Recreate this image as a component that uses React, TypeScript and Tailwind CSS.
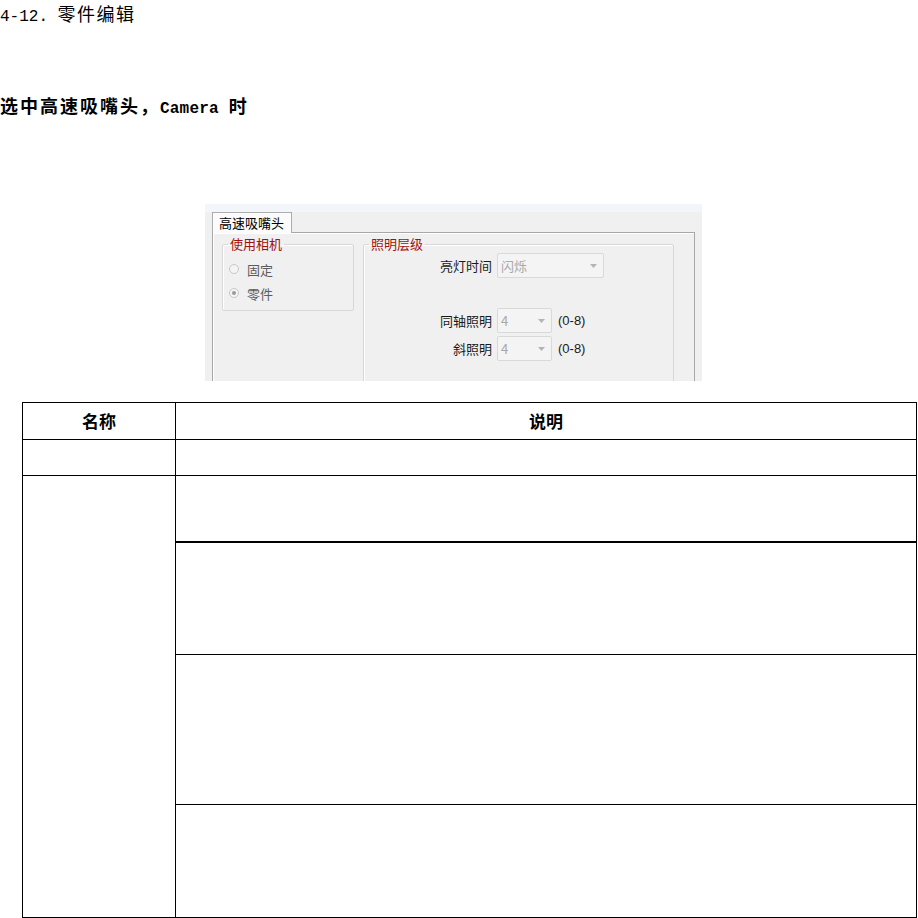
import type { ReactNode } from 'react';

const cjk = '"Noto Sans CJK SC", "Noto Sans", sans-serif';
const mono = '"Liberation Mono", "Noto Sans CJK SC", monospace';

// 截图里的禁用下拉框
function Combo({ width, value }: { width: string; value: string }) {
  return (
    <div className={`${width} h-[25px] flex items-center justify-between pl-[3px] pr-[6px] border border-[#d9d9d9] rounded-[2px] bg-[#f4f4f4]`}>
      <span className="text-[#a8a8a8] text-[13px] leading-none">{value}</span>
      <svg width="7" height="4" viewBox="0 0 7 4">
        <path d="M0 0 L7 0 L3.5 4 Z" fill="#b4b4b4" />
      </svg>
    </div>
  );
}

function Radio({ checked, label }: { checked?: boolean; label: string }) {
  return (
    <div className="h-[24px] flex items-center gap-[8px]">
      <div className="w-[10px] h-[10px] rounded-full border border-[#c8c8c8] bg-[#f4f4f4] flex items-center justify-center">
        {checked && <div className="w-[4px] h-[4px] rounded-full bg-[#9a9a9a]" />}
      </div>
      <span className="text-[13px] text-[#5c5c5c] leading-none">{label}</span>
    </div>
  );
}

function GroupBox({ title, className, children }: { title: string; className: string; children: ReactNode }) {
  return (
    <fieldset className={`border border-[#d8d8d8] rounded-[2px] shadow-[inset_1px_1px_0_#ffffff] ${className}`}>
      <legend className="ml-[5px] px-[2px] text-[13px] leading-[14px] text-[#a30f0f]">{title}</legend>
      {children}
    </fieldset>
  );
}

function LabelRow({ label, children, className }: { label: string; children: ReactNode; className: string }) {
  return (
    <div className={`flex items-center ${className}`}>
      <div className="w-[128px] text-right text-[13px] text-[#1a1a1a] leading-none">{label}</div>
      <div className="ml-[5px] flex items-center">{children}</div>
    </div>
  );
}

export default function App() {
  return (
    <div className="w-[918px] h-[918px] bg-white text-black overflow-hidden" style={{ fontFamily: cjk }}>
      {/* 标题 */}
      <div className="flex items-baseline whitespace-nowrap">
        <span className="text-[16px] leading-normal whitespace-pre" style={{ fontFamily: mono }}>4-12. </span>
        <span className="text-[18px] leading-normal tracking-[1.5px]">零件编辑</span>
      </div>

      <div className="mt-[63px] flex items-baseline whitespace-nowrap font-bold">
        <span className="text-[18px] leading-normal tracking-[2px]">选中高速吸嘴头，</span>
        <span className="text-[16px] leading-normal tracking-[0.2px] whitespace-pre" style={{ fontFamily: mono }}>Camera </span>
        <span className="text-[18px] leading-normal">时</span>
      </div>

      {/* 软件截图 */}
      <div className="ml-[205px] mt-[83px] w-[497px] h-[177px] bg-[#f0f0f0] overflow-hidden flex flex-col">
        <div className="h-[8px] bg-[#f2f5fa] shrink-0" />
        <div className="flex-1 flex flex-col px-[7px]">
          <div className="flex h-[20px] shrink-0">
            <div className="w-[80px] h-[21px] border border-b-0 border-[#adadad] bg-[#fbfbfb] text-[13px] leading-[19px] pl-[6px] relative z-10">
              高速吸嘴头
            </div>
          </div>
          <div className="flex-1 border border-b-0 border-[#a8a8a8] shadow-[inset_1px_1px_0_#ffffff] flex items-start pl-[9px] pt-[4px]">
            <GroupBox title="使用相机" className="w-[132px] h-[74px]">
              <div className="pl-[6px] pt-[6px]">
                <Radio label="固定" />
                <Radio checked label="零件" />
              </div>
            </GroupBox>
            <GroupBox title="照明层级" className="ml-[9px] w-[311px] h-[160px]">
              <LabelRow label="亮灯时间" className="mt-[2px]">
                <Combo width="w-[107px]" value="闪烁" />
              </LabelRow>
              <LabelRow label="同轴照明" className="mt-[30px]">
                <Combo width="w-[55px]" value="4" />
                <span className="ml-[6px] text-[13px] text-[#1a1a1a]" style={{ fontFamily: '"Liberation Sans", sans-serif' }}>(0-8)</span>
              </LabelRow>
              <LabelRow label="斜照明" className="mt-[3px]">
                <Combo width="w-[55px]" value="4" />
                <span className="ml-[6px] text-[13px] text-[#1a1a1a]" style={{ fontFamily: '"Liberation Sans", sans-serif' }}>(0-8)</span>
              </LabelRow>
            </GroupBox>
          </div>
        </div>
      </div>

      {/* 说明表格 */}
      <div className="ml-[22px] mt-[21px] w-[895px] border border-black">
        <div className="flex h-[37px] border-b border-black font-bold text-[17px]">
          <div className="w-[153px] border-r border-black flex items-center justify-center">名称</div>
          <div className="flex-1 flex items-center justify-center">说明</div>
        </div>
        <div className="flex h-[36px] border-b border-black">
          <div className="w-[153px] border-r border-black" />
          <div className="flex-1" />
        </div>
        <div className="flex">
          <div className="w-[153px] border-r border-black" />
          <div className="flex-1 flex flex-col">
            <div className="h-[67px] border-b-2 border-black" />
            <div className="h-[112px] border-b border-black" />
            <div className="h-[150px] border-b border-black" />
            <div className="h-[112px]" />
          </div>
        </div>
      </div>
    </div>
  );
}
